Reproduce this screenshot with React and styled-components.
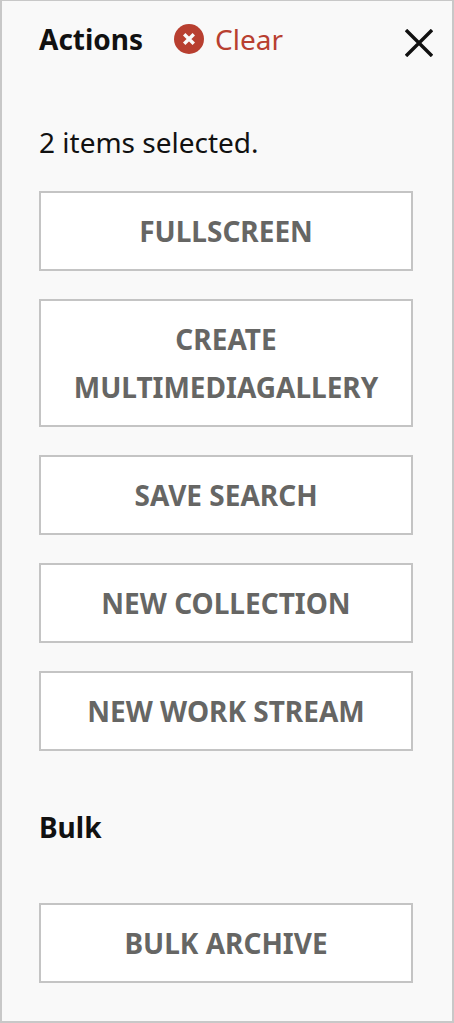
import React from "react";
import styled, { createGlobalStyle } from "styled-components";

const GlobalStyle = createGlobalStyle`
  html, body {
    margin: 0;
    padding: 0;
    background: #fff;
  }
  * {
    box-sizing: border-box;
  }
`;

const Panel = styled.aside`
  width: 454px;
  height: 1023px;
  background: #f9f9f9;
  border: 1px solid #c8c8c8;
  border-width: 1px 2px 2px 2px;
  padding: 0 39px 0 37px;
  font-family: "Noto Sans", "Open Sans", sans-serif;
  color: #111;
  position: relative;
`;

const Header = styled.header`
  display: flex;
  align-items: center;
  height: 75px;
`;

const Title = styled.h2`
  margin: 0 31px 0 0;
  font-size: 28px;
  font-weight: 700;
`;

const Clear = styled.button`
  display: flex;
  align-items: center;
  gap: 11px;
  padding: 0;
  border: 0;
  background: none;
  color: #b83f30;
  font: inherit;
  font-size: 28px;
`;

const CloseButton = styled.button`
  position: absolute;
  top: 28px;
  right: 19px;
  width: 28px;
  height: 28px;
  padding: 0;
  border: 0;
  background: none;
`;

const Status = styled.p`
  margin: 48px 0 31px;
  font-size: 28px;
  line-height: 36px;
`;

const Actions = styled.div`
  display: flex;
  flex-direction: column;
  gap: 28px;
`;

const ActionButton = styled.button`
  width: 374px;
  min-height: 80px;
  padding: 14px 20px;
  background: #fff;
  border: 2px solid #c4c4c4;
  color: #666664;
  font: inherit;
  font-size: 28px;
  font-weight: 700;
  line-height: 48px;
`;

const Section = styled.h3`
  margin: 58px 0;
  font-size: 28px;
  line-height: 36px;
  font-weight: 700;
`;

const actions = ["FULLSCREEN", "CREATE MULTIMEDIAGALLERY", "SAVE SEARCH", "NEW COLLECTION", "NEW WORK STREAM"];

export default function App() {
  return (
    <>
      <GlobalStyle />
      <Panel>
        <Header>
          <Title>Actions</Title>
          <Clear>
            <svg width="30" height="30" viewBox="0 0 30 30">
              <circle cx="15" cy="15" r="15" fill="#b83f30" />
              <path d="M10.2 10.2l9.6 9.6M19.8 10.2l-9.6 9.6" stroke="#f9f9f9" strokeWidth="3.4" />
            </svg>
            Clear
          </Clear>
        </Header>
        <CloseButton aria-label="Close">
          <svg width="28" height="28" viewBox="0 0 28 28">
            <path d="M1 1l26 26M27 1l-26 26" stroke="#111" strokeWidth="3.4" fill="none" />
          </svg>
        </CloseButton>
        <Status>2 items selected.</Status>
        <Actions>
          {actions.map((label) => (
            <ActionButton key={label}>{label}</ActionButton>
          ))}
        </Actions>
        <Section>Bulk</Section>
        <ActionButton>BULK ARCHIVE</ActionButton>
      </Panel>
    </>
  );
}
